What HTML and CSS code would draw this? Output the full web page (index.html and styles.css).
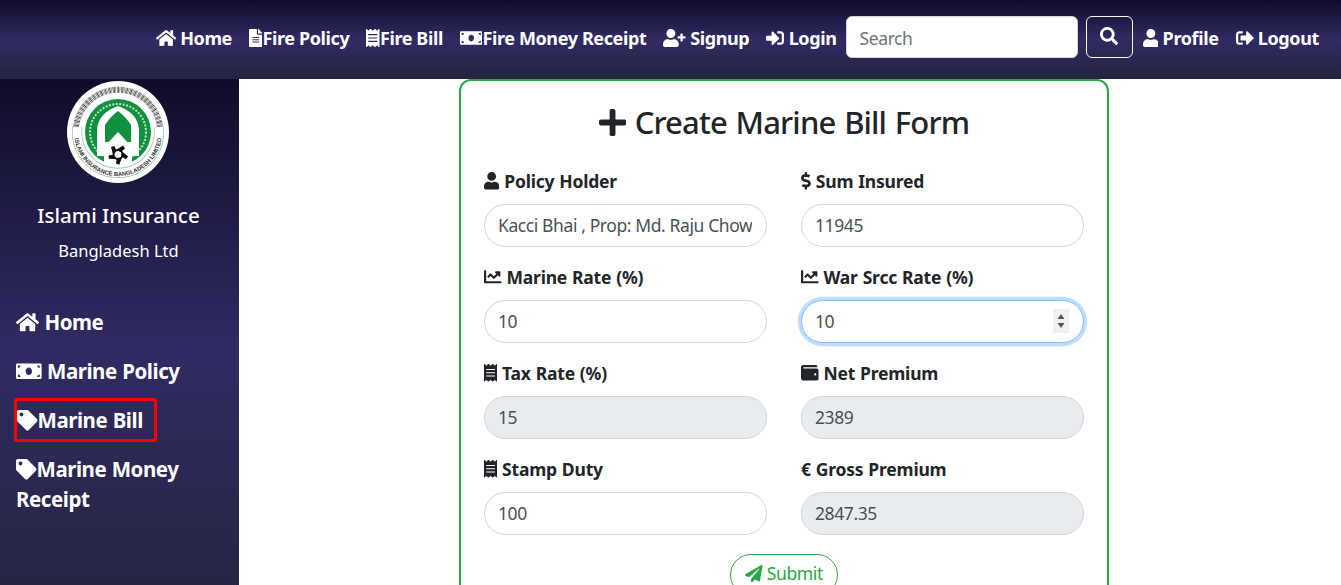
FILE: index.html
```html
<!DOCTYPE html>
<html lang="en">

<head>
 <meta charset="UTF-8">
 <meta name="viewport" content="width=device-width, initial-scale=1.0">
 <title>Create Marine Bill</title>
 <link rel="stylesheet" href="styles.css">
</head>

<body>
 <!-- icon sprite -->
 <svg class="sprite" aria-hidden="true">
  <defs>
   <path id="i-home" d="M280.37 148.26L96 300.11V464a16 16 0 0 0 16 16l112.06-.29a16 16 0 0 0 15.92-16V368a16 16 0 0 1 16-16h64a16 16 0 0 1 16 16v95.64a16 16 0 0 0 16 16.05L464 480a16 16 0 0 0 16-16V300L295.67 148.26a12.19 12.19 0 0 0-15.3 0zM571.6 251.47L488 182.56V44.05a12 12 0 0 0-12-12h-56a12 12 0 0 0-12 12v72.61L318.47 43a48 48 0 0 0-61 0L4.34 251.47a12 12 0 0 0-1.6 16.9l25.5 31A12 12 0 0 0 45.15 301l235.22-193.74a12.19 12.19 0 0 1 15.3 0L530.9 301a12 12 0 0 0 16.9-1.6l25.5-31a12 12 0 0 0-1.7-16.93z"/>
   <path id="i-file" d="M224 136V0H24C10.7 0 0 10.7 0 24v464c0 13.3 10.7 24 24 24h336c13.3 0 24-10.7 24-24V160H248c-13.2 0-24-10.8-24-24zm64 236c0 6.6-5.4 12-12 12H108c-6.6 0-12-5.4-12-12v-8c0-6.6 5.4-12 12-12h168c6.6 0 12 5.4 12 12v8zm0-64c0 6.6-5.4 12-12 12H108c-6.6 0-12-5.4-12-12v-8c0-6.6 5.4-12 12-12h168c6.6 0 12 5.4 12 12v8zm0-72v8c0 6.6-5.4 12-12 12H108c-6.6 0-12-5.4-12-12v-8c0-6.6 5.4-12 12-12h168c6.6 0 12 5.4 12 12zm96-114.1v6.1H256V0h6.1c6.4 0 12.5 2.5 17 7l97.9 98c4.5 4.5 7 10.6 7 16.9z"/>
   <path id="i-receipt" d="M358.4 3.2L320 48 265.6 3.2a15.9 15.9 0 0 0-19.2 0L192 48 137.6 3.2a15.9 15.9 0 0 0-19.2 0L64 48 25.6 3.2C15-4.7 0 2.8 0 16v480c0 13.2 15 20.7 25.6 12.8L64 464l54.4 44.8a15.9 15.9 0 0 0 19.2 0L192 464l54.4 44.8a15.9 15.9 0 0 0 19.2 0L320 464l38.4 44.8c10.5 7.9 25.6.4 25.6-12.8V16c0-13.2-15-20.7-25.6-12.8zM320 360c0 4.4-3.6 8-8 8H72c-4.4 0-8-3.6-8-8v-16c0-4.4 3.6-8 8-8h240c4.4 0 8 3.6 8 8v16zm0-96c0 4.4-3.6 8-8 8H72c-4.4 0-8-3.6-8-8v-16c0-4.4 3.6-8 8-8h240c4.4 0 8 3.6 8 8v16zm0-96c0 4.4-3.6 8-8 8H72c-4.4 0-8-3.6-8-8v-16c0-4.4 3.6-8 8-8h240c4.4 0 8 3.6 8 8v16z"/>
   <path id="i-money" d="M608 64H32C14.33 64 0 78.33 0 96v320c0 17.67 14.33 32 32 32h576c17.67 0 32-14.33 32-32V96c0-17.67-14.33-32-32-32zM48 400v-64c35.35 0 64 28.65 64 64H48zm0-224v-64h64c0 35.35-28.65 64-64 64zm272 176c-44.19 0-80-42.99-80-96 0-53.02 35.82-96 80-96s80 42.98 80 96c0 53.03-35.83 96-80 96zm272 48h-64c0-35.35 28.65-64 64-64v64zm0-224c-35.35 0-64-28.65-64-64h64v64z"/>
   <path id="i-user-plus" d="M624 208h-64v-64c0-8.8-7.2-16-16-16h-32c-8.8 0-16 7.2-16 16v64h-64c-8.8 0-16 7.2-16 16v32c0 8.8 7.2 16 16 16h64v64c0 8.8 7.2 16 16 16h32c8.8 0 16-7.2 16-16v-64h64c8.8 0 16-7.2 16-16v-32c0-8.8-7.2-16-16-16zm-400 48c70.7 0 128-57.3 128-128S294.7 0 224 0 96 57.3 96 128s57.3 128 128 128zm89.6 32h-16.7c-22.2 10.2-46.9 16-72.9 16s-50.6-5.8-72.9-16h-16.7C60.2 288 0 348.2 0 422.4V464c0 26.5 21.5 48 48 48h352c26.5 0 48-21.5 48-48v-41.6c0-74.2-60.2-134.4-134.4-134.4z"/>
   <path id="i-login" d="M416 448h-84c-6.6 0-12-5.4-12-12v-40c0-6.6 5.4-12 12-12h84c17.7 0 32-14.3 32-32V160c0-17.7-14.3-32-32-32h-84c-6.6 0-12-5.4-12-12V76c0-6.6 5.4-12 12-12h84c53 0 96 43 96 96v192c0 53-43 96-96 96zm-47-201L201 79c-15-15-41-4.5-41 17v96H24c-13.3 0-24 10.7-24 24v96c0 13.3 10.7 24 24 24h136v96c0 21.5 26 32 41 17l168-168c9.3-9.4 9.3-24.6 0-34z"/>
   <path id="i-search" d="M505 442.7L405.3 343c-4.5-4.5-10.6-7-17-7H372c27.6-35.3 44-79.7 44-128C416 93.1 322.9 0 208 0S0 93.1 0 208s93.1 208 208 208c48.3 0 92.7-16.4 128-44v16.3c0 6.4 2.5 12.5 7 17l99.7 99.7c9.4 9.4 24.6 9.4 33.9 0l28.3-28.3c9.4-9.4 9.4-24.6.1-34zM208 336c-70.7 0-128-57.2-128-128 0-70.7 57.2-128 128-128 70.7 0 128 57.2 128 128 0 70.7-57.2 128-128 128z"/>
   <path id="i-user" d="M224 256c70.7 0 128-57.3 128-128S294.7 0 224 0 96 57.3 96 128s57.3 128 128 128zm89.6 32h-16.7c-22.2 10.2-46.9 16-72.9 16s-50.6-5.8-72.9-16h-16.7C60.2 288 0 348.2 0 422.4V464c0 26.5 21.5 48 48 48h352c26.5 0 48-21.5 48-48v-41.6c0-74.2-60.2-134.4-134.4-134.4z"/>
   <path id="i-logout" d="M497 273L329 441c-15 15-41 4.5-41-17v-96H152c-13.3 0-24-10.7-24-24v-96c0-13.3 10.7-24 24-24h136V88c0-21.4 25.9-32 41-17l168 168c9.3 9.4 9.3 24.6 0 34zM192 436v-40c0-6.6-5.4-12-12-12H96c-17.7 0-32-14.3-32-32V160c0-17.7 14.3-32 32-32h84c6.6 0 12-5.4 12-12V76c0-6.6-5.4-12-12-12H96c-53 0-96 43-96 96v192c0 53 43 96 96 96h84c6.6 0 12-5.4 12-12z"/>
   <path id="i-tag" d="M0 252.118V48C0 21.49 21.49 0 48 0h204.118a48 48 0 0 1 33.941 14.059l211.882 211.882c18.745 18.745 18.745 49.137 0 67.882L293.823 497.941c-18.745 18.745-49.137 18.745-67.882 0L14.059 286.059A48 48 0 0 1 0 252.118zM112 64c-26.51 0-48 21.49-48 48s21.49 48 48 48 48-21.49 48-48-21.49-48-48-48z"/>
   <path id="i-plus" d="M416 208H272V64c0-17.67-14.33-32-32-32h-32c-17.67 0-32 14.33-32 32v144H32c-17.67 0-32 14.33-32 32v32c0 17.67 14.33 32 32 32h144v144c0 17.67 14.33 32 32 32h32c17.67 0 32-14.33 32-32V304h144c17.67 0 32-14.33 32-32v-32c0-17.67-14.33-32-32-32z"/>
   <path id="i-dollar" d="M209.2 233.4l-108-31.6C88.7 198.2 80 186.5 80 173.5c0-16.3 13.2-29.5 29.5-29.5h66.3c12.2 0 24.2 3.7 34.2 10.5 6.1 4.1 14.3 3.1 19.5-2l34.8-34c7.1-6.9 6.1-18.4-1.8-24.5C238 74.8 207.4 64.1 176 64V16c0-8.8-7.2-16-16-16h-32c-8.8 0-16 7.2-16 16v48h-2.5C45.8 64-5.4 118.7.5 183.6c4.2 46.1 39.4 83.6 83.8 96.6l102.5 30c12.5 3.7 21.2 15.3 21.2 28.3 0 16.3-13.2 29.5-29.5 29.5h-66.3C100 368 88 364.3 78 357.5c-6.1-4.1-14.3-3.1-19.5 2l-34.8 34c-7.1 6.9-6.1 18.4 1.8 24.5 24.5 19.2 55.1 29.9 86.5 30v48c0 8.8 7.2 16 16 16h32c8.8 0 16-7.2 16-16v-48.2c46.6-.9 90.3-28.6 105.7-72.7 21.5-61.6-14.6-124.8-72.5-141.7z"/>
   <path id="i-chart" d="M496 384H64V80c0-8.84-7.16-16-16-16H16C7.16 64 0 71.16 0 80v336c0 17.67 14.33 32 32 32h464c8.84 0 16-7.16 16-16v-32c0-8.84-7.16-16-16-16zM464 96H345.94c-21.38 0-32.09 25.85-16.97 40.97l32.4 32.4L288 242.75l-73.37-73.37c-12.5-12.5-32.76-12.5-45.25 0l-68.69 68.69c-6.25 6.25-6.25 16.38 0 22.63l22.62 22.62c6.25 6.25 16.38 6.25 22.63 0L192 237.25l73.37 73.37c12.5 12.5 32.76 12.5 45.25 0l96-96 32.4 32.4c15.12 15.12 40.97 4.41 40.97-16.97V112c.01-8.84-7.15-16-16-16z"/>
   <path id="i-wallet" d="M461.2 128H80c-8.84 0-16-7.16-16-16s7.16-16 16-16h384c8.84 0 16-7.16 16-16 0-26.51-21.49-48-48-48H64C28.65 32 0 60.65 0 96v320c0 35.35 28.65 64 64 64h397.2c28.02 0 50.8-21.53 50.8-48V176c0-26.47-22.78-48-50.8-48zM416 336c-17.67 0-32-14.33-32-32s14.33-32 32-32 32 14.33 32 32-14.33 32-32 32z"/>
   <path id="i-plane" d="M476 3.2L12.5 270.6c-18.1 10.4-15.8 35.6 2.2 43.2L121 358.4l287.3-253.2c5.5-4.9 13.3 2.6 8.6 8.3L176 407v80.5c0 23.6 28.5 32.9 42.5 15.8L282 426l124.6 52.2c14.2 6 30.4-2.9 33-18.2l72-432C515 7.8 493.3-6.8 476 3.2z"/>
  </defs>
 </svg>

 <nav class="topbar">
  <a href="#"><svg class="icon" viewBox="0 0 576 512"><use href="#i-home"/></svg> Home</a>
  <a href="#"><svg class="icon" viewBox="0 0 384 512"><use href="#i-file"/></svg>Fire Policy</a>
  <a href="#"><svg class="icon" viewBox="0 0 384 512"><use href="#i-receipt"/></svg>Fire Bill</a>
  <a href="#"><svg class="icon" viewBox="0 0 640 512"><use href="#i-money"/></svg>Fire Money Receipt</a>
  <a href="#"><svg class="icon" viewBox="0 0 640 512"><use href="#i-user-plus"/></svg> Signup</a>
  <a href="#"><svg class="icon" viewBox="0 0 512 512"><use href="#i-login"/></svg> Login</a>
  <form class="search">
   <input type="text" placeholder="Search">
   <button type="button"><svg class="icon" viewBox="0 0 512 512"><use href="#i-search"/></svg></button>
  </form>
  <a href="#"><svg class="icon" viewBox="0 0 448 512"><use href="#i-user"/></svg> Profile</a>
  <a href="#"><svg class="icon" viewBox="0 0 512 512"><use href="#i-logout"/></svg> Logout</a>
 </nav>

 <div class="page">
  <aside class="sidebar">
   <svg class="logo" viewBox="0 0 104 104">
    <defs>
     <path id="arcBottom" d="M8.3 47A44 44 0 1 0 95.7 47"/>
     <path id="blade" d="M50 70L57 65.5L59 68.5L55 72Z"/>
    </defs>
    <circle cx="52" cy="52" r="51" fill="#fff"/>
    <!-- bengali lettering on top, drawn as a broken ring -->
    <path d="M10 47A42.3 42.3 0 0 1 94 47" fill="none" stroke="#555" stroke-width="6" stroke-dasharray=".7 .5 1.1 .6 .5 .9"/>
    <circle cx="52" cy="52" r="33" fill="#11913f"/>
    <circle cx="52" cy="52" r="28" fill="none" stroke="#bfe0c9" stroke-width="2" stroke-dasharray="2 1.5"/>
    <path d="M31 76V50Q32 33 52 26Q72 33 73 50V76Z" fill="#fff"/>
    <path d="M39 66V45Q44 37 52 31Q60 37 65 45V66L52 52Z" fill="#11913f"/>
    <path d="M38 62H66V88H38Z" fill="#fff"/>
    <path d="M11.3 47A41 41 0 1 0 92.7 47" fill="none" stroke="#8cc4a0" stroke-width="10"/>
    <path d="M11.3 47A41 41 0 1 0 92.7 47" fill="none" stroke="#fff" stroke-width="8.6"/>
    <text class="logo-text"><textPath href="#arcBottom" startOffset="50%" text-anchor="middle">ISLAMI INSURANCE BANGLADESH LIMITED</textPath></text>
    <!-- gear wheel -->
    <circle cx="52" cy="74.5" r="4.5" fill="none" stroke="#111" stroke-width="1.8"/>
    <use href="#blade" fill="#111"/>
    <use href="#blade" fill="#111" transform="rotate(72 52 74.5)"/>
    <use href="#blade" fill="#111" transform="rotate(144 52 74.5)"/>
    <use href="#blade" fill="#111" transform="rotate(216 52 74.5)"/>
    <use href="#blade" fill="#111" transform="rotate(288 52 74.5)"/>
   </svg>
   <h2 class="brand">Islami Insurance</h2>
   <p class="brand-sub">Bangladesh Ltd</p>
   <ul class="side-menu">
    <li><a href="#"><svg class="icon" viewBox="0 0 576 512"><use href="#i-home"/></svg> Home</a></li>
    <li><a href="#"><svg class="icon" viewBox="0 0 640 512"><use href="#i-money"/></svg> Marine Policy</a></li>
    <li><a href="#" class="marked"><svg class="icon" viewBox="0 0 512 512"><use href="#i-tag"/></svg>Marine Bill</a></li>
    <li><a href="#"><svg class="icon" viewBox="0 0 512 512"><use href="#i-tag"/></svg>Marine Money Receipt</a></li>
   </ul>
  </aside>

  <main class="content">
   <form class="card">
    <h1><svg class="icon" viewBox="0 0 448 512"><use href="#i-plus"/></svg> Create Marine Bill Form</h1>
    <div class="fields">
     <div class="field">
      <label><svg class="icon" viewBox="0 0 448 512"><use href="#i-user"/></svg> Policy Holder</label>
      <input type="text" value="Kacci Bhai , Prop: Md. Raju Chowdhury">
     </div>
     <div class="field">
      <label><svg class="icon" viewBox="0 0 288 512"><use href="#i-dollar"/></svg> Sum Insured</label>
      <input type="text" value="11945">
     </div>
     <div class="field">
      <label><svg class="icon" viewBox="0 0 512 512"><use href="#i-chart"/></svg> Marine Rate (%)</label>
      <input type="text" value="10">
     </div>
     <div class="field">
      <label><svg class="icon" viewBox="0 0 512 512"><use href="#i-chart"/></svg> War Srcc Rate (%)</label>
      <input type="number" class="focused" value="10">
     </div>
     <div class="field">
      <label><svg class="icon" viewBox="0 0 384 512"><use href="#i-receipt"/></svg> Tax Rate (%)</label>
      <input type="text" value="15" readonly>
     </div>
     <div class="field">
      <label><svg class="icon" viewBox="0 0 512 512"><use href="#i-wallet"/></svg> Net Premium</label>
      <input type="text" value="2389" readonly>
     </div>
     <div class="field">
      <label><svg class="icon" viewBox="0 0 384 512"><use href="#i-receipt"/></svg> Stamp Duty</label>
      <input type="text" value="100">
     </div>
     <div class="field">
      <label>€ Gross Premium</label>
      <input type="text" value="2847.35" readonly>
     </div>
    </div>
    <div class="actions">
     <button type="button"><svg class="icon" viewBox="0 0 512 512"><use href="#i-plane"/></svg> Submit</button>
    </div>
   </form>
  </main>
 </div>
</body>

</html>
```

FILE: styles.css
```css
* {
 box-sizing: border-box;
}

html,
body {
 height: 585px;
 overflow: hidden;
}

body {
 margin: 0;
 font-family: 'Noto Sans', 'Open Sans', sans-serif;
 color: #212529;
 background-color: #fff;
}

a {
 color: #fff;
 text-decoration: none;
}

.sprite {
 display: none;
}

.icon {
 height: 1em;
 fill: currentColor;
 vertical-align: -.125em;
}

/* top bar */
.topbar {
 height: 79px;
 display: flex;
 align-items: center;
 justify-content: flex-end;
 gap: 17px;
 padding: 0 22px 3px 0;
 background: linear-gradient(to bottom, #0f0c29, #302b63, #24243e);
}

.topbar a {
 font-size: 18px;
 font-weight: 700;
 letter-spacing: -.38px;
 white-space: nowrap;
}

.search {
 display: flex;
 gap: 8px;
 margin: -2px -7px 0 -8px;
}

.search input {
 width: 232px;
 height: 42px;
 padding: 1px 13px 0;
 font: 17.5px 'Noto Sans', sans-serif;
 letter-spacing: -.4px;
 border: 1px solid #ced4da;
 border-radius: 6px;
}

.search input::placeholder {
 color: #6c757d;
}

.search button {
 width: 47px;
 height: 42px;
 padding: 0;
 font-size: 18px;
 color: #fff;
 background: transparent;
 border: 1px solid #f8f9fa;
 border-radius: 6px;
}

/* sidebar */
.page {
 display: flex;
 height: 506px;
 overflow: hidden;
}

.sidebar {
 width: 239px;
 height: 542px;
 flex-shrink: 0;
 padding-top: 1px;
 color: #fff;
 background: linear-gradient(to bottom, #0f0c29, #302b63, #24243e);
}

.logo {
 display: block;
 width: 104px;
 height: 104px;
 margin-left: 66px;
}

.logo-text {
 font: 700 5.9px 'Liberation Sans', sans-serif;
 fill: #333;
}

.brand {
 margin: 17px 0 0;
 padding-right: 2px;
 font-size: 20.5px;
 font-weight: 500;
 line-height: 28px;
 text-align: center;
}

.brand-sub {
 margin: 10px 0 0;
 padding-right: 2px;
 font-size: 16.5px;
 line-height: 24px;
 text-align: center;
}

.side-menu {
 list-style-type: none;
 margin: 44px 0 0;
 padding: 0 16px;
}

.side-menu li {
 margin-bottom: 19px;
 font-size: 20.5px;
 font-weight: 700;
 line-height: 30px;
 letter-spacing: -.45px;
 word-spacing: .5px;
}

.side-menu .marked {
 display: inline-block;
 padding: 4px 11px 4px 0;
 margin: -7px -14px -7px -2px;
 border: 3px solid #f00;
 border-radius: 2px;
}

/* form card */
.content {
 flex: 1;
 display: flex;
 justify-content: center;
 padding-right: 12px;
}

.card {
 width: 650px;
 height: 560px;
 padding: 0 23px;
 border: 2px solid #28a745;
 border-radius: 12px;
}

.card h1 {
 margin: 20px 0 0;
 font-size: 31px;
 font-weight: 500;
 line-height: 42px;
 letter-spacing: -.85px;
 word-spacing: 1.5px;
 text-align: center;
}

.fields {
 display: grid;
 grid-template-columns: 283px 283px;
 column-gap: 34px;
 row-gap: 19px;
 margin-top: 26.5px;
}

.field label {
 display: block;
 font-size: 17.5px;
 font-weight: 700;
 line-height: 26px;
 letter-spacing: -.2px;
 word-spacing: .6px;
 margin-top: -2px;
 margin-bottom: 10px;
}

.field input {
 display: block;
 width: 100%;
 height: 43px;
 padding: 0 14px 0 13px;
 font: 17.5px 'Noto Sans', sans-serif;
 letter-spacing: -.4px;
 color: #495057;
 background-color: #fff;
 border: 1px solid #ced4da;
 border-radius: 22px;
 outline: none;
}

.field input[readonly] {
 background-color: #e9ecef;
}

.field input.focused {
 border-color: #80bdff;
 box-shadow: 0 0 0 3.2px rgba(0, 123, 255, .25);
}

.field input::-webkit-inner-spin-button {
 -webkit-appearance: none;
 opacity: 1;
 width: 16px;
 height: 24px;
 background: #f0f0f0 url("data:image/svg+xml,%3Csvg xmlns='http://www.w3.org/2000/svg' width='16' height='24'%3E%3Cpath d='M8 5l3.5 5h-7zM8 19l-3.5-5h7z' fill='%23555'/%3E%3C/svg%3E") no-repeat center;
}

.actions {
 margin-top: 19px;
 text-align: center;
}

.actions button {
 width: 108px;
 height: 42px;
 padding: 0 0 3px;
 font: 17.5px 'Noto Sans', sans-serif;
 letter-spacing: -.4px;
 color: #28a745;
 background: #fff;
 border: 1px solid #28a745;
 border-radius: 21px;
}
```
